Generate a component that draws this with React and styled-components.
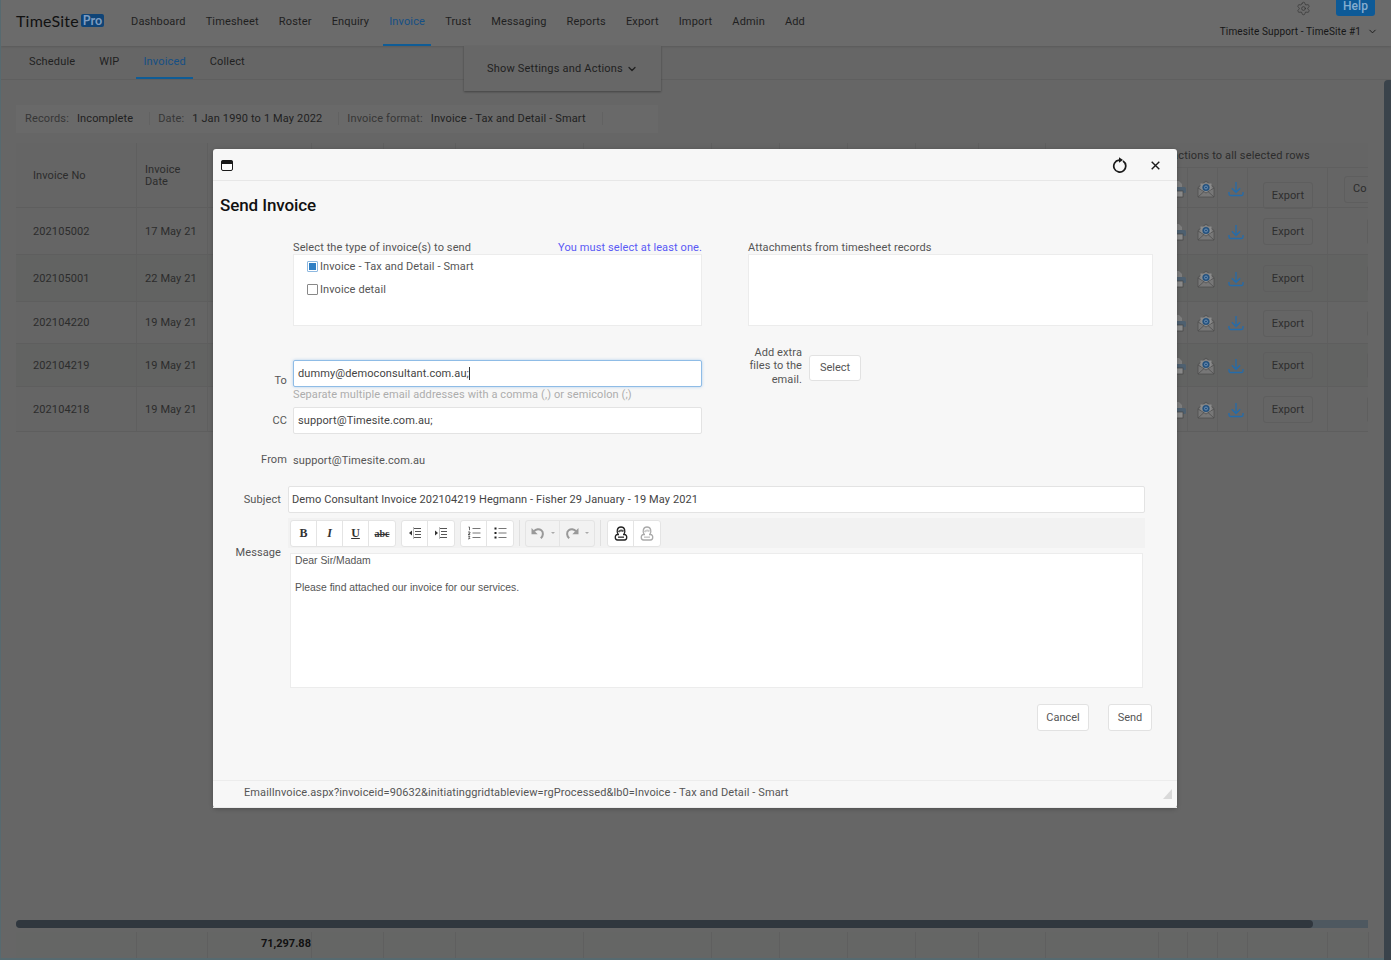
import React from 'react'
import styled, { createGlobalStyle } from 'styled-components'
import { Settings, ChevronDown } from 'lucide-react'

const GlobalStyle = createGlobalStyle`
  html, body { margin: 0; padding: 0; height: 100%; overflow: hidden; background: #666; }
  body { font-family: Roboto, "Liberation Sans", sans-serif; font-size: 11px; letter-spacing: .1px; }
  * { box-sizing: border-box; }
`

const NAV = ['Dashboard', 'Timesheet', 'Roster', 'Enquiry', 'Invoice', 'Trust', 'Messaging', 'Reports', 'Export', 'Import', 'Admin', 'Add']
const SUBNAV = ['Schedule', 'WIP', 'Invoiced', 'Collect']
const COLUMNS = '121px 71px 104px 72px 72px 128px 128px 68px 68px 68px 63px 67px 113px 29px 30px 30px 80px 41px'
const ROWS = [
  { no: '202105002', date: '17 May 21', h: 47 },
  { no: '202105001', date: '22 May 21', h: 47, shade: true },
  { no: '202104220', date: '19 May 21', h: 42 },
  { no: '202104219', date: '19 May 21', h: 43, shade: true },
  { no: '202104218', date: '19 May 21', h: 45 },
]

const Page = styled.div`
  position: relative;
  width: 1391px;
  height: 960px;
  display: flex;
  flex-direction: column;
  background: #666;
  color: #1f1f1f;
  border-left: 1px solid #566a70;
  overflow: hidden;
`
const Header = styled.header`
  height: 46px;
  flex: none;
  display: flex;
  padding-left: 15px;
  padding-right: 16px;
  background: #6b6b6b;
  box-shadow: 0 1px 2px rgba(0,0,0,.12);
`
const Logo = styled.div`
  display: flex;
  align-items: center;
  height: 40px;
  width: 109px;
  font-family: Lato, Roboto, sans-serif;
  font-size: 16px;
  letter-spacing: .2px;
  color: #111;
`
const LogoBadge = styled.span`
  margin-left: 2px;
  padding: 0 2px;
  height: 13px;
  line-height: 13px;
  border-radius: 2px;
  background: #0f4477;
  color: #7d9cc0;
  font-size: 12.5px;
  font-weight: 700;
  letter-spacing: 0;
`
const Nav = styled.nav`
  display: flex;
  gap: 8px;
  letter-spacing: .16px;
`
const NavItem = styled.a`
  display: flex;
  align-items: center;
  height: 46px;
  padding: 0 6px 2px;
  color: ${p => (p.$active ? '#154f85' : '#1f1f1f')};
  border-bottom: 2px solid ${p => (p.$active ? '#0f5c96' : 'transparent')};
`
const HeaderRight = styled.div`
  margin-left: auto;
  display: flex;
  flex-direction: column;
  align-items: flex-end;
`
const HeaderTools = styled.div`
  display: flex;
  align-items: flex-start;
  height: 17px;
  gap: 25px;
  color: #2e2e2e;
  svg { margin-top: 1px; }
`
const HelpButton = styled.div`
  width: 39px;
  height: 16px;
  line-height: 13px;
  font-size: 12px;
  text-align: center;
  border-radius: 0 0 3px 3px;
  background: #0d5a97;
  color: #85add0;
  font-weight: 500;
`
const Account = styled.div`
  display: flex;
  align-items: center;
  gap: 6px;
  margin-top: 9px;
  margin-right: -3px;
  font-size: 10px;
  letter-spacing: .12px;
  color: #161616;
`
const SubNavBar = styled.div`
  height: 34px;
  flex: none;
  display: flex;
  gap: 10px;
  padding-left: 21px;
  letter-spacing: .16px;
  border-bottom: 1px solid #5f5f5f;
`
const SubNavItem = styled.a`
  display: flex;
  align-items: center;
  height: 33px;
  padding: 0 7px;
  color: ${p => (p.$active ? '#154f85' : '#1f1f1f')};
  border-bottom: 2px solid ${p => (p.$active ? '#0f5c96' : 'transparent')};
`
const SettingsTab = styled.div`
  position: absolute;
  left: 463px;
  top: 46px;
  width: 197px;
  height: 45px;
  display: flex;
  align-items: center;
  justify-content: center;
  gap: 3px;
  background: #676767;
  box-shadow: 0 1px 2px rgba(0,0,0,.35);
  letter-spacing: .2px;
`
const Content = styled.main`
  flex: 1;
  display: flex;
  flex-direction: column;
  padding: 25px 23px 0 15px;
`
const FilterBar = styled.div`
  width: 642px;
  height: 28px;
  display: flex;
  align-items: center;
  padding: 0 0 2px 9px;
  background: #696969;
  letter-spacing: .14px;
`
const FilterGroup = styled.div`
  display: flex;
  gap: 8px;
  padding-right: 16px;
  margin-right: 8px;
  border-right: 1px solid #626262;
`
const FilterLabel = styled.span`
  color: #363636;
`
const TableWrap = styled.div`
  margin-top: 10px;
  width: 1352px;
  overflow: hidden;
`
const Row = styled.div`
  display: grid;
  grid-template-columns: ${COLUMNS};
  height: ${p => p.$h}px;
  background: ${p => (p.$shade ? '#626362' : '#656565')};
  border-bottom: 1px solid #5e5e5e;
  color: #2c2c2c;
`
const Cell = styled.div`
  display: flex;
  align-items: center;
  justify-content: ${p => (p.$center ? 'center' : 'flex-start')};
  padding-left: ${p => p.$pad ?? 8}px;
  padding-top: ${p => (p.$head ? 0 : 1)}px;
  border-right: 1px solid #5f5f5f;
  line-height: 12px;
  min-width: 0;
  white-space: nowrap;
  &:last-child { border-right: 0; }
`
const BulkCell = styled.div`
  grid-column: 13 / span 6;
  display: flex;
  flex-direction: column;
  min-width: 0;
`
const BulkTitle = styled.div`
  height: 25px;
  flex: none;
  display: flex;
  align-items: center;
  padding-left: 95px;
  letter-spacing: .16px;
  border-bottom: 1px solid #5f5f5f;
`
const BulkCells = styled.div`
  flex: 1;
  display: grid;
  grid-template-columns: 113px 29px 30px 30px 80px 41px;
`
const ExportButton = styled.div`
  width: 50px;
  height: 27px;
  margin-left: 15px;
  margin-top: ${p => (p.$low ? 13 : 0)}px;
  padding-top: 1px;
  display: flex;
  align-items: center;
  justify-content: center;
  border: 1px solid #5e5e5e;
  border-radius: 3px;
  color: #2e2e2e;
`
const CutButton = styled.div`
  flex: none;
  width: 44px;
  height: 27px;
  margin-left: ${p => p.$offset}px;
  padding-left: 8px;
  display: flex;
  align-items: center;
  border: 1px solid #5e5e5e;
  border-radius: 3px;
`
const Spacer = styled.div`
  flex: 1;
`
const HScroll = styled.div`
  width: 1352px;
  height: 8px;
  border-radius: 4px 0 0 4px;
  background: #4e5860;
`
const HThumb = styled.div`
  width: 1297px;
  height: 8px;
  border-radius: 4px;
  background: #30373e;
`
const TotalsRow = styled.div`
  margin-top: 4px;
  width: 1352px;
  height: 26px;
  display: grid;
  grid-template-columns: ${COLUMNS};
  background: #656665;
`
const TotalCell = styled.div`
  border-right: 1px solid #5f5f5f;
  display: flex;
  align-items: center;
  justify-content: flex-end;
  padding-bottom: 3px;
  font-weight: 700;
  letter-spacing: 0;
  color: #111;
`
const BottomEdge = styled.div`
  height: 2px;
  background: #566a70;
  margin: 0 -23px 0 -15px;
`
const VScroll = styled.div`
  position: absolute;
  right: 0;
  top: 80px;
  bottom: 0;
  width: 7px;
  border-radius: 4px 0 0 0;
  background: #3a434b;
`

const Modal = styled.section`
  position: absolute;
  left: 212px;
  top: 149px;
  width: 964px;
  height: 659px;
  display: flex;
  flex-direction: column;
  background: #f7f7f7;
  border-radius: 3px;
  color: #555;
  box-shadow: 0 1px 4px rgba(0,0,0,.25);
`
const TitleBar = styled.div`
  height: 32px;
  flex: none;
  display: flex;
  align-items: center;
  padding: 1px 17px 0 8px;
  border-bottom: 1px solid #e7e7e7;
  color: #1a1a1a;
`
const TitleSpacer = styled.div`
  margin-left: auto;
`
const IconButton = styled.div`
  display: flex;
  width: ${p => p.$w}px;
  justify-content: ${p => (p.$end ? 'flex-end' : 'center')};
`
const Heading = styled.h2`
  margin: 0;
  height: 48px;
  padding: 14px 0 0 7px;
  font-size: 17px;
  line-height: 20px;
  font-weight: 500;
  letter-spacing: -0.1px;
  color: #111;
`
const TopSection = styled.div`
  margin: 12px 0 0 80px;
  display: grid;
  grid-template-columns: 409px 405px;
  column-gap: 46px;
`
const ListHead = styled.div`
  height: 13px;
  line-height: 14px;
  display: flex;
  justify-content: space-between;
  white-space: nowrap;
`
const Warning = styled.span`
  color: #5a5af5;
`
const ListBox = styled.div`
  height: 72px;
  padding: 3px 13px;
  background: #fff;
  border: 1px solid #ececec;
`
const CheckRow = styled.div`
  display: flex;
  align-items: center;
  gap: 2px;
  height: 17px;
  margin-bottom: 5.5px;
`
const CheckBox = styled.span`
  width: 11px;
  height: 11px;
  display: flex;
  align-items: center;
  justify-content: center;
  border: 1px solid ${p => (p.$checked ? '#8db8e0' : '#888')};
  border-radius: 1px;
  background: #fff;
  &::after {
    content: '';
    display: ${p => (p.$checked ? 'block' : 'none')};
    width: 7px;
    height: 7px;
    background: #2f7fc4;
  }
`
const MiddleSection = styled.div`
  margin-top: 34px;
  display: grid;
  grid-template-columns: 489px 1fr;
  height: 126px;
`
const AddressGrid = styled.div`
  display: grid;
  grid-template-columns: 74px 409px;
  grid-auto-rows: min-content;
  column-gap: 6px;
`
const FieldLabel = styled.label`
  text-align: right;
  align-self: center;
  padding-top: ${p => p.$top || 0}px;
  white-space: nowrap;
`
const Field = styled.div`
  height: 27px;
  display: flex;
  align-items: center;
  padding-left: ${p => p.$pad ?? 4}px;
  background: #fff;
  border: 1px solid ${p => (p.$focus ? '#8fbce6' : '#e3e3e3')};
  border-radius: 2px;
  box-shadow: ${p => (p.$focus ? '0 0 3px rgba(100,165,230,.5)' : 'none')};
  color: #444;
`
const TextCaret = styled.span`
  width: 1px;
  height: 13px;
  background: #333;
`
const Hint = styled.div`
  grid-column: 2;
  height: 19.5px;
  padding-top: 1px;
  line-height: 13px;
  color: #adadad;
`
const FromValue = styled.div`
  height: 52px;
  line-height: 54px;
`
const ExtraFiles = styled.div`
  display: flex;
  gap: 7px;
  margin-left: 40px;
  margin-top: -14px;
  align-items: center;
  height: 40px;
`
const ExtraLabel = styled.div`
  width: 60px;
  text-align: right;
  line-height: 13.5px;
`
const PlainButton = styled.button`
  height: ${p => p.$h || 26}px;
  width: ${p => p.$w}px;
  margin-top: ${p => p.$top || 0}px;
  padding: 0;
  background: #fff;
  border: 1px solid #e2e2e2;
  border-radius: 3px;
  font: inherit;
  color: #555;
`
const MessageGrid = styled.div`
  display: grid;
  grid-template-columns: 68px 857px;
  column-gap: 7px;
`
const Toolbar = styled.div`
  grid-column: 2;
  margin-top: 5px;
  height: 30px;
  display: flex;
  align-items: center;
  padding-left: 2px;
  background: #f2f2f2;
`
const ToolGroup = styled.div`
  display: flex;
  height: 27px;
  margin-right: 5px;
  border: 1px solid #e4e4e4;
  border-radius: 3px;
  background: ${p => (p.$disabled ? 'transparent' : '#fff')};
`
const ToolButton = styled.div`
  width: ${p => p.$w || 26}px;
  display: flex;
  align-items: center;
  justify-content: center;
  gap: ${p => p.$gap || 0}px;
  border-right: 1px solid #e4e4e4;
  &:last-child { border-right: 0; }
`
const SerifGlyph = styled.span`
  font-family: "Liberation Serif", serif;
  font-size: ${p => p.$size || 12}px;
  font-weight: 700;
  font-style: ${p => (p.$italic ? 'italic' : 'normal')};
  text-decoration: ${p => p.$deco || 'none'};
  color: #333;
  letter-spacing: 0;
`
const ToolDivider = styled.div`
  width: 1px;
  height: 26px;
  background: #e0e0e0;
  margin-right: ${p => p.$gap || 5}px;
`
const Caret = styled.span`
  width: 0;
  height: 0;
  border-left: 2px solid transparent;
  border-right: 2px solid transparent;
  border-top: 2px solid #aaa;
`
const MessageLabel = styled(FieldLabel)`
  align-self: start;
  margin-top: -2px;
  height: 13px;
  line-height: 13px;
`
const Editor = styled.div`
  margin-left: 2px;
  width: 853px;
  height: 135px;
  margin-top: 5px;
  padding: 0 4px;
  background: #fff;
  border: 1px solid #ececec;
  font-family: "Liberation Sans", Arial, sans-serif;
  font-size: 10.4px;
  letter-spacing: 0;
  line-height: 13px;
  color: #555;
  p { margin: 0 0 14px; }
`
const Actions = styled.div`
  margin-top: 16px;
  display: flex;
  justify-content: flex-end;
  gap: 19px;
  padding-right: 25px;
`
const ModalFooter = styled.div`
  position: relative;
  margin-top: auto;
  height: 28px;
  flex: none;
  display: flex;
  align-items: center;
  padding: 0 0 3px 31px;
  border-top: 1px solid #ececec;
  border-bottom: 1px solid #ececec;
`
const Resizer = styled.div`
  position: absolute;
  right: 5px;
  bottom: 8px;
  width: 0;
  height: 0;
  border-left: 9px solid transparent;
  border-bottom: 10px solid #d9d9d9;
`

const WindowIcon = () => (
  <svg width="12" height="11" viewBox="0 0 12 11">
    <rect x="0.5" y="0.5" width="11" height="10" rx="1.5" fill="#fff" stroke="#1a1a1a" />
    <rect x="0.5" y="0.5" width="11" height="3.5" fill="#1a1a1a" />
  </svg>
)
const RefreshIcon = () => (
  <svg width="15" height="16" viewBox="0 0 15 16" fill="none">
    <path d="M7 3.1A6 6 0 1 0 11 4" stroke="#1a1a1a" strokeWidth="1.7" />
    <path d="M7 .3 11 3 7 5.7Z" fill="#1a1a1a" />
  </svg>
)
const CloseIcon = () => (
  <svg width="9" height="9" viewBox="0 0 9 9">
    <path d="M.7.7 8.3 8.3M8.3.7.7 8.3" stroke="#1a1a1a" strokeWidth="1.4" />
  </svg>
)
const PrinterIcon = () => (
  <svg width="24" height="18" viewBox="0 0 24 18">
    <path d="M6 1h10l3 3v4H6z" fill="#7d7d7d" />
    <rect x="2" y="7" width="21" height="6" rx="1.5" fill="#4e6070" />
    <rect x="6" y="11" width="14" height="6" fill="#8a8a8a" stroke="#444" strokeWidth=".7" />
  </svg>
)
const MailIcon = () => (
  <svg width="18" height="18" viewBox="0 0 18 18">
    <path d="M1 7.5 9 1l8 6.5V17H1z" fill="#777" stroke="#4e4e4e" strokeWidth=".8" />
    <path d="M3.5 3.5h11v7L9 13 3.5 10.5z" fill="#8b8b8b" />
    <circle cx="9" cy="7.5" r="3.6" fill="#24527e" />
    <circle cx="9" cy="7.5" r="1.5" fill="none" stroke="#7d9cc0" strokeWidth=".8" />
    <path d="M1 8 9 13l8-5M1 17l6-5.5M17 17l-6-5.5" fill="none" stroke="#4e4e4e" strokeWidth=".8" />
  </svg>
)
const DownloadIcon = () => (
  <svg width="16" height="16" viewBox="0 0 16 16" fill="none" stroke="#246cab" strokeWidth="1.3">
    <path d="M8 1v10.500M3.800 7.300 8 11.500l4.200-4.200" />
    <path d="M1 11v2c0 .9.6 1.500 1.500 1.500h11c.9 0 1.500-.6 1.500-1.500v-2" />
  </svg>
)
const IndentIcon = ({ flip }) => (
  <svg width="14" height="12" viewBox="0 0 14 12" fill="none" stroke="#555" strokeWidth="1">
    <path d="M5 1.5h8M7 4.5h6M7 7.5h6M5 10.5h8" />
    <path d={flip ? 'M4 3.5 1 6l3 2.5z' : 'M1 3.5 4 6 1 8.5z'} fill="#333" stroke="none" />
    <path d="M5.5 0v12" stroke="#bbb" />
  </svg>
)
const OrderedIcon = () => (
  <svg width="14" height="14" viewBox="0 0 14 14" fill="none" stroke="#777" strokeWidth="1">
    <path d="M5.5 2.5h8M5.5 7h8M5.5 11.5h8" />
    <path d="M1.5 1h1v3.200M1 6h2v1.200L1 8.5h2.200M1 10.200h2l-1 1 1 1.200-2 .6" stroke="#444" strokeWidth=".8" />
  </svg>
)
const BulletIcon = () => (
  <svg width="13" height="12" viewBox="0 0 13 12" fill="none" stroke="#777" strokeWidth="1">
    <path d="M4.5 1.5h8M4.5 6h8M4.5 10.5h8" />
    <path d="M.5.5h2v2h-2zM.5 5h2v2h-2zM.5 9.5h2v2h-2z" fill="#222" stroke="none" />
  </svg>
)
const UndoIcon = ({ flip }) => (
  <svg width="14" height="13" viewBox="0 0 14 13" fill="none" style={flip ? { transform: 'scaleX(-1)' } : undefined}>
    <path d="M3 4.2C5 2 8.2 1.8 10.300 3.300c2.400 1.800 2 5.600-.5 8" stroke="#999" strokeWidth="2" />
    <path d="M.5 1v6.200h6.200z" fill="#999" />
  </svg>
)
const LinkIcon = ({ color, blob }) => (
  <svg width="14" height="15" viewBox="0 0 14 15" fill="none" stroke={color} strokeWidth="1.3">
    <path d="M4 8C2.500 6 2.800 1 7 1s4.500 5 3 7" />
    <path d="M4.500 6c1-1.800 4-2.200 5-.5" stroke={blob} strokeWidth="2" />
    <path d="M5 8.500H3.500C.5 8.500.5 14 3.500 14h7c3 0 3-5.500 0-5.500H9" />
    <path d="M4 11.200h6" stroke={blob} strokeWidth="1.6" />
  </svg>
)

const App = () => (
  <>
    <GlobalStyle />
    <Page>
      <Header>
        <Logo>TimeSite<LogoBadge>Pro</LogoBadge></Logo>
        <Nav>
          {NAV.map(item => <NavItem key={item} $active={item === 'Invoice'}>{item}</NavItem>)}
        </Nav>
        <HeaderRight>
          <HeaderTools>
            <Settings size={15} strokeWidth={1} />
            <HelpButton>Help</HelpButton>
          </HeaderTools>
          <Account>Timesite Support - TimeSite #1 <ChevronDown size={11} strokeWidth={2} /></Account>
        </HeaderRight>
      </Header>
      <SubNavBar>
        {SUBNAV.map(item => <SubNavItem key={item} $active={item === 'Invoiced'}>{item}</SubNavItem>)}
      </SubNavBar>
      <SettingsTab>Show Settings and Actions <ChevronDown size={12} strokeWidth={2.5} /></SettingsTab>
      <Content>
        <FilterBar>
          <FilterGroup><FilterLabel>Records:</FilterLabel> Incomplete</FilterGroup>
          <FilterGroup><FilterLabel>Date:</FilterLabel> 1 Jan 1990 to 1 May 2022</FilterGroup>
          <FilterGroup><FilterLabel>Invoice format:</FilterLabel> Invoice - Tax and Detail - Smart</FilterGroup>
        </FilterBar>
        <TableWrap>
          <Row $h={65}>
            <Cell $head $pad={17}>Invoice No</Cell>
            <Cell $head>Invoice<br />Date</Cell>
            {Array.from({ length: 10 }, (_, i) => <Cell key={i} />)}
            <BulkCell>
              <BulkTitle>Apply actions to all selected rows</BulkTitle>
              <BulkCells>
                <Cell />
                <Cell $center $pad={4}><PrinterIcon /></Cell>
                <Cell $center $pad={7}><MailIcon /></Cell>
                <Cell $center $pad={7}><DownloadIcon /></Cell>
                <Cell $pad={0}><ExportButton $low>Export</ExportButton></Cell>
                <Cell $pad={0}><CutButton $offset={16}>Co</CutButton></Cell>
              </BulkCells>
            </BulkCell>
          </Row>
          {ROWS.map(row => (
            <Row key={row.no} $h={row.h} $shade={row.shade}>
              <Cell $pad={17}>{row.no}</Cell>
              <Cell>{row.date}</Cell>
              {Array.from({ length: 10 }, (_, i) => <Cell key={i} />)}
              <Cell />
              <Cell $center $pad={4}><PrinterIcon /></Cell>
              <Cell $center $pad={7}><MailIcon /></Cell>
              <Cell $center $pad={7}><DownloadIcon /></Cell>
              <Cell $pad={0}><ExportButton>Export</ExportButton></Cell>
              <Cell $pad={0}><CutButton $offset={39} /></Cell>
            </Row>
          ))}
        </TableWrap>
        <Spacer />
        <HScroll><HThumb /></HScroll>
        <TotalsRow>
          <TotalCell />
          <TotalCell />
          <TotalCell>71,297.88</TotalCell>
          {Array.from({ length: 15 }, (_, i) => <TotalCell key={i} />)}
        </TotalsRow>
        <BottomEdge />
      </Content>
      <VScroll />

      <Modal>
        <TitleBar>
          <WindowIcon />
          <TitleSpacer />
          <IconButton $w={15}><RefreshIcon /></IconButton>
          <IconButton $w={33} $end><CloseIcon /></IconButton>
        </TitleBar>
        <Heading>Send Invoice</Heading>
        <TopSection>
          <div>
            <ListHead>Select the type of invoice(s) to send <Warning>You must select at least one.</Warning></ListHead>
            <ListBox>
              <CheckRow><CheckBox $checked />Invoice - Tax and Detail - Smart</CheckRow>
              <CheckRow><CheckBox />Invoice detail</CheckRow>
            </ListBox>
          </div>
          <div>
            <ListHead>Attachments from timesheet records</ListHead>
            <ListBox />
          </div>
        </TopSection>
        <MiddleSection>
          <AddressGrid>
            <FieldLabel $top={13}>To</FieldLabel>
            <Field $focus>dummy@democonsultant.com.au;<TextCaret /></Field>
            <Hint>Separate multiple email addresses with a comma (,) or semicolon (;)</Hint>
            <FieldLabel>CC</FieldLabel>
            <Field>support@Timesite.com.au;</Field>
            <FieldLabel>From</FieldLabel>
            <FromValue>support@Timesite.com.au</FromValue>
          </AddressGrid>
          <ExtraFiles>
            <ExtraLabel>Add extra<br />files to the<br />email.</ExtraLabel>
            <PlainButton $w={52} $top={3}>Select</PlainButton>
          </ExtraFiles>
        </MiddleSection>
        <MessageGrid>
          <FieldLabel>Subject</FieldLabel>
          <Field $pad={3}>Demo Consultant Invoice 202104219 Hegmann - Fisher 29 January - 19 May 2021</Field>
          <Toolbar>
            <ToolGroup>
              <ToolButton><SerifGlyph>B</SerifGlyph></ToolButton>
              <ToolButton><SerifGlyph $italic>I</SerifGlyph></ToolButton>
              <ToolButton><SerifGlyph $deco="underline">U</SerifGlyph></ToolButton>
              <ToolButton><SerifGlyph $size={10} $deco="line-through">abc</SerifGlyph></ToolButton>
            </ToolGroup>
            <ToolGroup>
              <ToolButton><IndentIcon flip /></ToolButton>
              <ToolButton><IndentIcon /></ToolButton>
            </ToolGroup>
            <ToolGroup>
              <ToolButton><OrderedIcon /></ToolButton>
              <ToolButton><BulletIcon /></ToolButton>
            </ToolGroup>
            <ToolDivider />
            <ToolGroup $disabled>
              <ToolButton $w={34} $gap={6}><UndoIcon /><Caret /></ToolButton>
              <ToolButton $w={34} $gap={6}><UndoIcon flip /><Caret /></ToolButton>
            </ToolGroup>
            <ToolDivider $gap={6} />
            <ToolGroup>
              <ToolButton><LinkIcon color="#222" blob="#555" /></ToolButton>
              <ToolButton><LinkIcon color="#aaa" blob="#ccc" /></ToolButton>
            </ToolGroup>
          </Toolbar>
          <MessageLabel>Message</MessageLabel>
          <Editor>
            <p>Dear Sir/Madam</p>
            <p>Please find attached our invoice for our services.</p>
          </Editor>
        </MessageGrid>
        <Actions>
          <PlainButton $w={52} $h={27}>Cancel</PlainButton>
          <PlainButton $w={44} $h={27}>Send</PlainButton>
        </Actions>
        <ModalFooter>
          EmailInvoice.aspx?invoiceid=90632&amp;initiatinggridtableview=rgProcessed&amp;lb0=Invoice - Tax and Detail - Smart
          <Resizer />
        </ModalFooter>
      </Modal>
    </Page>
  </>
)

export default App
